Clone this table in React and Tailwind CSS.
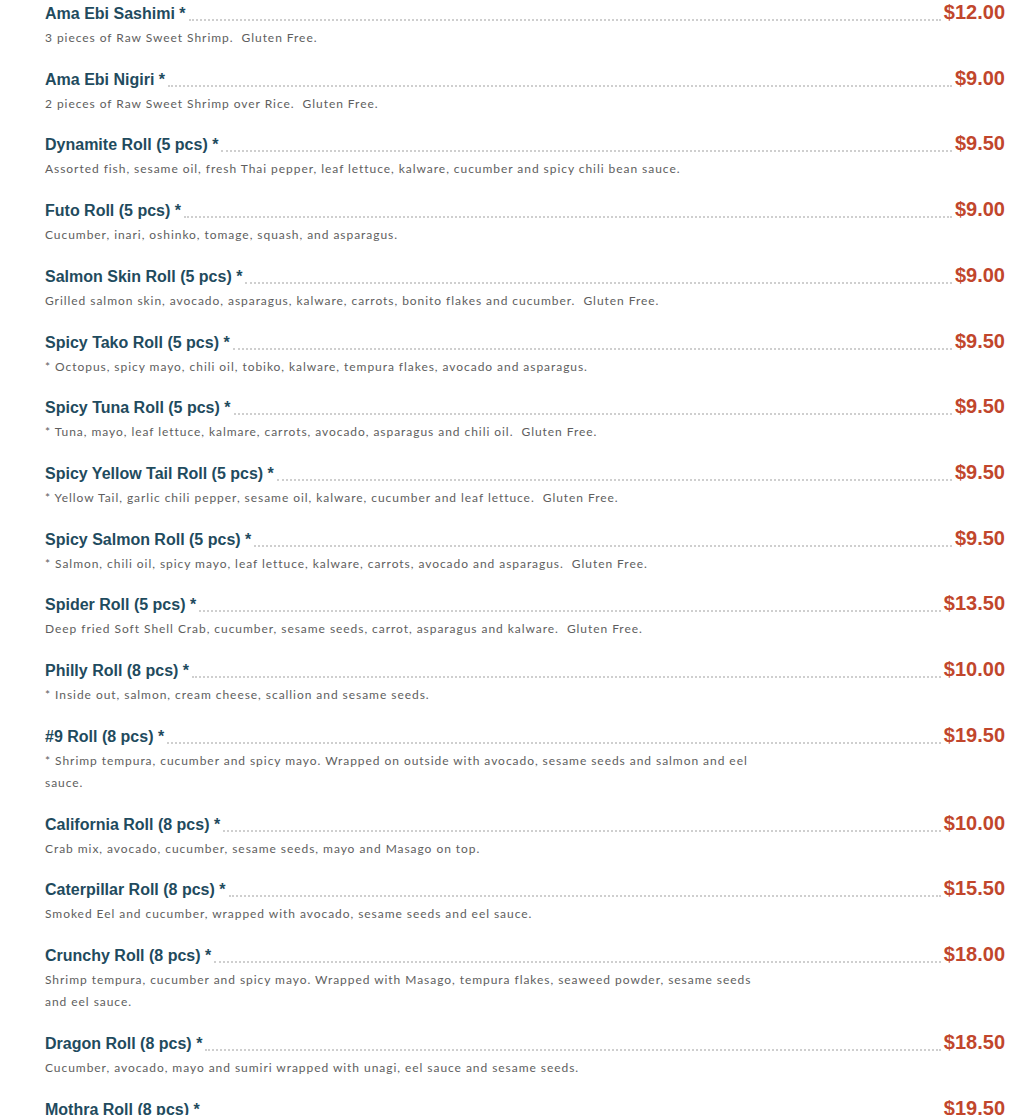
const items = [
  ['Ama Ebi Sashimi *', '$12.00', '3 pieces of Raw Sweet Shrimp.  Gluten Free.'],
  ['Ama Ebi Nigiri *', '$9.00', '2 pieces of Raw Sweet Shrimp over Rice.  Gluten Free.'],
  ['Dynamite Roll (5 pcs) *', '$9.50', 'Assorted fish, sesame oil, fresh Thai pepper, leaf lettuce, kalware, cucumber and spicy chili bean sauce.'],
  ['Futo Roll (5 pcs) *', '$9.00', 'Cucumber, inari, oshinko, tomage, squash, and asparagus.'],
  ['Salmon Skin Roll (5 pcs) *', '$9.00', 'Grilled salmon skin, avocado, asparagus, kalware, carrots, bonito flakes and cucumber.  Gluten Free.'],
  ['Spicy Tako Roll (5 pcs) *', '$9.50', '* Octopus, spicy mayo, chili oil, tobiko, kalware, tempura flakes, avocado and asparagus.'],
  ['Spicy Tuna Roll (5 pcs) *', '$9.50', '* Tuna, mayo, leaf lettuce, kalmare, carrots, avocado, asparagus and chili oil.  Gluten Free.'],
  ['Spicy Yellow Tail Roll (5 pcs) *', '$9.50', '* Yellow Tail, garlic chili pepper, sesame oil, kalware, cucumber and leaf lettuce.  Gluten Free.'],
  ['Spicy Salmon Roll (5 pcs) *', '$9.50', '* Salmon, chili oil, spicy mayo, leaf lettuce, kalware, carrots, avocado and asparagus.  Gluten Free.'],
  ['Spider Roll (5 pcs) *', '$13.50', 'Deep fried Soft Shell Crab, cucumber, sesame seeds, carrot, asparagus and kalware.  Gluten Free.'],
  ['Philly Roll (8 pcs) *', '$10.00', '* Inside out, salmon, cream cheese, scallion and sesame seeds.'],
  ['#9 Roll (8 pcs) *', '$19.50', '* Shrimp tempura, cucumber and spicy mayo. Wrapped on outside with avocado, sesame seeds and salmon and eel sauce.'],
  ['California Roll (8 pcs) *', '$10.00', 'Crab mix, avocado, cucumber, sesame seeds, mayo and Masago on top.'],
  ['Caterpillar Roll (8 pcs) *', '$15.50', 'Smoked Eel and cucumber, wrapped with avocado, sesame seeds and eel sauce.'],
  ['Crunchy Roll (8 pcs) *', '$18.00', 'Shrimp tempura, cucumber and spicy mayo. Wrapped with Masago, tempura flakes, seaweed powder, sesame seeds and eel sauce.'],
  ['Dragon Roll (8 pcs) *', '$18.50', 'Cucumber, avocado, mayo and sumiri wrapped with unagi, eel sauce and sesame seeds.'],
  ['Mothra Roll (8 pcs) *', '$19.50', ''],
];

const MenuItem = ({ name, price, desc }) => (
  <div className="pb-[18.73px]">
    <div className="flex items-end h-6">
      <span className="text-[16px] font-bold leading-6 text-[#1f4b5e] whitespace-nowrap" style={{ fontFamily: '"Liberation Sans", Arial, sans-serif' }}>
        {name}
      </span>
      <span className="flex-1 mx-[3px] mb-[5px] border-b-2 border-dotted border-[#cfcfcf]"></span>
      <span className="mb-[2px] text-[20px] font-bold leading-6 text-[#c1462c] whitespace-nowrap" style={{ fontFamily: '"Liberation Sans", Arial, sans-serif' }}>
        {price}
      </span>
    </div>
    {desc && (
      <p className="mt-[1px] max-w-[725px] text-[12px] leading-[22px] tracking-[0.95px] text-[#5e5e5e] whitespace-pre-wrap" style={{ fontFamily: 'Lato, "Open Sans", sans-serif' }}>
        {desc}
      </p>
    )}
  </div>
);

const App = () => {
  return (
    <div className="bg-white min-h-screen pl-[45px] pr-[25px] pt-[2px]">
      {items.map(([name, price, desc]) => (
        <MenuItem key={name} name={name} price={price} desc={desc} />
      ))}
    </div>
  );
};

export default App;
